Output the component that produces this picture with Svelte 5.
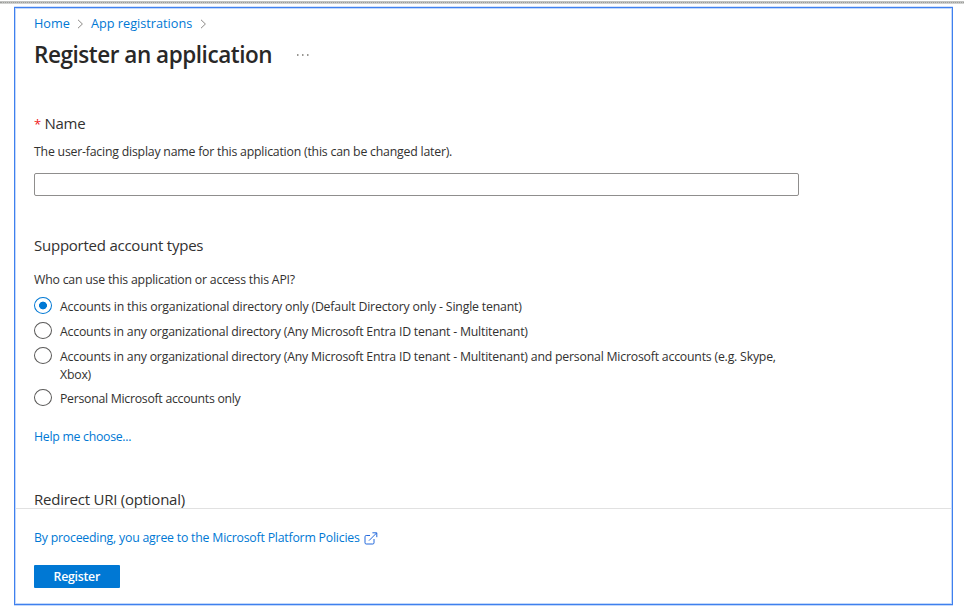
<script>
  const crumbs = ['Home', 'App registrations'];
  const options = [
    { id: 'single', lines: ['Accounts in this organizational directory only (Default Directory only - Single tenant)'] },
    { id: 'multi', lines: ['Accounts in any organizational directory (Any Microsoft Entra ID tenant - Multitenant)'] },
    {
      id: 'mixed',
      lines: [
        'Accounts in any organizational directory (Any Microsoft Entra ID tenant - Multitenant) and personal Microsoft accounts (e.g. Skype,',
        'Xbox)'
      ]
    },
    { id: 'personal', lines: ['Personal Microsoft accounts only'] }
  ];
  let selected = $state('single');
  let name = $state('');
</script>

<div class="page">
  <div class="rule"></div>
  <main class="frame">
    <section class="content">
      <nav class="crumbs">
        {#each crumbs as crumb, i}
          <a href="#top" class="crumb c{i}">{crumb}</a>
          <svg class="chevron" width="7" height="10" viewBox="0 0 7 10"><path d="M1 .8 5.4 5 1 9.2" /></svg>
        {/each}
      </nav>
      <header class="title">
        <h1>Register an application</h1>
        <svg width="12" height="4" viewBox="0 0 12 4"><path d="M0 1.2h1.5v1.5H0zM5 1.2h1.5v1.5H5zM10 1.2h1.5v1.5H10z" /></svg>
      </header>

      <h2 class="name"><span class="star">*</span>Name</h2>
      <p class="hint">The user-facing display name for this application (this can be changed later).</p>
      <input class="field" type="text" bind:value={name} aria-label="Name" />

      <h2 class="types">Supported account types</h2>
      <p class="who">Who can use this application or access this API?</p>
      <div class="options">
        {#each options as option}
          <label class="option {option.id}">
            <input type="radio" name="accounts" value={option.id} bind:group={selected} />
            <span class="label">{#each option.lines as line}<span class="line">{line}</span>{/each}</span>
          </label>
        {/each}
      </div>
      <a class="help" href="#help">Help me choose...</a>
      <h2 class="redirect">Redirect URI (optional)</h2>
    </section>

    <footer>
      <a class="policy" href="#policies">
        <span>By proceeding, you agree to the Microsoft Platform Policies</span>
        <svg width="14" height="13" viewBox="0 0 14 13">
          <path d="M6 3.5H2.2Q1 3.5 1 4.7v6.1Q1 12 2.2 12h6.6q1.2 0 1.2-1.2V7M5 8.6 12.6 1M8.4.8h4.4v4.4" />
        </svg>
      </a>
      <button>Register</button>
    </footer>
  </main>
</div>

<style>
  :global(body) {
    margin: 0;
    background: #fff;
  }
  .page {
    display: flow-root;
    height: 610px;
    overflow: hidden;
    font-family: 'Open Sans', 'Noto Sans', sans-serif;
    font-size: 12.3px;
    line-height: 18px;
    letter-spacing: -0.21px;
    color: #323130;
    white-space: nowrap;
  }
  .rule {
    height: 1px;
    margin-top: 1px;
    background: #c2c3c1;
    border-bottom: 1px dotted #9c9d9b;
    box-shadow: 0 1px #d0d1cf;
  }
  .frame {
    box-sizing: border-box;
    width: 939px;
    height: 598px;
    margin: 4px 0 0 14px;
    border: 1px solid #3f80ee;
    box-shadow: inset 0 0 0 1px #c3d8fa, 0 -1px #d5e3fb, 0 1px #c3d8fa;
    display: flex;
    flex-direction: column;
  }
  .content {
    height: 500px;
    box-sizing: border-box;
    padding: 6px 0 0 19px;
    display: flex;
    flex-direction: column;
    align-items: flex-start;
  }
  .content > * {
    flex-shrink: 0;
  }
  h1,
  h2,
  p {
    margin: 0;
  }
  a {
    color: #0078d4;
    text-decoration: none;
  }
  .crumbs {
    display: flex;
    align-items: center;
    height: 18px;
    font-size: 12.7px;
    letter-spacing: 0;
  }
  .c0 {
    width: 36px;
  }
  .c1 {
    width: 102px;
  }
  .chevron {
    margin: 1px 7px 0;
    fill: none;
    stroke: #8a8886;
  }
  .title {
    display: flex;
    align-items: center;
    height: 32px;
    margin-top: 7px;
  }
  h1 {
    width: 263px;
    font-size: 22.5px;
    line-height: 32px;
    font-weight: 600;
    color: #292827;
    letter-spacing: -0.46px;
  }
  .title svg {
    fill: #77756f;
  }
  h2 {
    font-size: 15px;
    line-height: 22px;
    font-weight: 400;
    letter-spacing: -0.24px;
  }
  .name {
    margin-top: 41px;
  }
  .star {
    color: #f0201c;
    font-size: 13px;
    margin-right: 3.5px;
  }
  .hint {
    margin-top: 8px;
  }
  .field {
    box-sizing: border-box;
    width: 765px;
    height: 23px;
    margin-top: 12px;
    border: 1px solid #8f8e8d;
    border-radius: 2px;
    outline: 0;
    background: #fff;
  }
  .types {
    margin-top: 38px;
  }
  .who {
    margin-top: 15px;
  }
  .options {
    display: flex;
    flex-direction: column;
    gap: 7px;
    margin-top: 8px;
  }
  .option {
    display: flex;
    align-items: flex-start;
  }
  .option input {
    appearance: none;
    box-sizing: border-box;
    width: 18px;
    height: 17px;
    margin: 0 8px 0 0;
    border: 1px solid #5a5958;
    border-radius: 50%;
  }
  .option input:checked {
    border-color: #0078d4;
    background: radial-gradient(circle, #0078d4 3.6px, transparent 4.2px);
  }
  .label {
    padding-top: 1px;
    margin-bottom: -1px;
  }
  .mixed .label {
    margin-bottom: -2px;
  }
  .line {
    display: block;
  }
  .single {
    letter-spacing: -0.185px;
  }
  .personal {
    letter-spacing: -0.28px;
  }
  .help {
    margin-top: 21px;
    letter-spacing: -0.28px;
  }
  .redirect {
    margin-top: 42px;
  }
  footer {
    flex: 1;
    margin: 0 1px;
    padding: 20px 0 0 18px;
    border-top: 1px solid #e1e1e1;
  }
  .policy {
    display: flex;
    align-items: center;
    height: 18px;
  }
  .policy svg {
    margin: 1px 0 0 4px;
    fill: none;
    stroke: #2268dc;
  }
  button {
    display: block;
    width: 85.5px;
    height: 23px;
    margin-top: 18px;
    padding: 0;
    border: 0;
    border-radius: 1px;
    background: #0078d4;
    color: #fff;
    font: 600 12.3px/22px 'Open Sans', 'Noto Sans', sans-serif;
    letter-spacing: -0.25px;
  }
</style>
